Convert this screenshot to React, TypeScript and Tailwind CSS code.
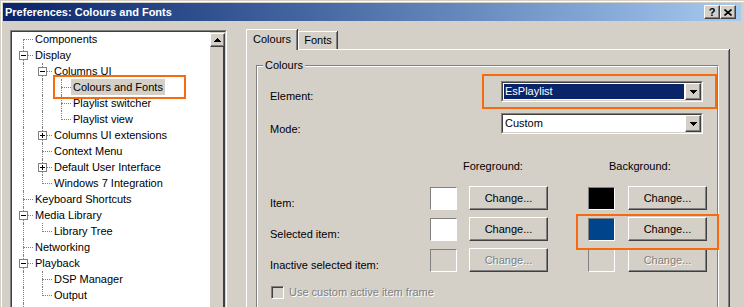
import React from "react";

type Row = {
  label: string;
  anc: boolean[];
  conn: "first" | "mid" | "end";
  box?: "+" | "-";
  sel?: boolean;
};

const rows: Row[] = [
  { label: "Components", anc: [], conn: "first" },
  { label: "Display", anc: [], conn: "mid", box: "-" },
  { label: "Columns UI", anc: [true], conn: "mid", box: "-" },
  { label: "Colours and Fonts", anc: [true, true], conn: "mid", sel: true },
  { label: "Playlist switcher", anc: [true, true], conn: "mid" },
  { label: "Playlist view", anc: [true, true], conn: "end" },
  { label: "Columns UI extensions", anc: [true], conn: "mid", box: "+" },
  { label: "Context Menu", anc: [true], conn: "mid" },
  { label: "Default User Interface", anc: [true], conn: "mid", box: "+" },
  { label: "Windows 7 Integration", anc: [true], conn: "end" },
  { label: "Keyboard Shortcuts", anc: [], conn: "mid" },
  { label: "Media Library", anc: [], conn: "mid", box: "-" },
  { label: "Library Tree", anc: [true], conn: "end" },
  { label: "Networking", anc: [], conn: "mid" },
  { label: "Playback", anc: [], conn: "mid", box: "-" },
  { label: "DSP Manager", anc: [true], conn: "mid" },
  { label: "Output", anc: [true], conn: "end" },
  { label: "Shell Integration", anc: [], conn: "mid" },
];

// classic 3D edges
const raised =
  "border border-t-white border-l-white border-r-[#404040] border-b-[#404040] shadow-[inset_-1px_-1px_0_#808080]";
const sunkenOuter =
  "border border-t-[#808080] border-l-[#808080] border-r-white border-b-white";
const sunkenInner =
  "border border-t-[#404040] border-l-[#404040] border-r-[#d4d0c8] border-b-[#d4d0c8]";
const disabledText = "text-[#808080] [text-shadow:1px_1px_0_#fff]";

function TreeRow({ row }: { row: Row }) {
  return (
    <div className="flex h-4 items-center">
      {row.anc.map((on, i) => (
        <div key={i} className="relative h-4 w-[19px] shrink-0">
          {on && (
            <div className="absolute left-[11px] top-0 h-4 border-l border-dotted border-[#808080]" />
          )}
        </div>
      ))}
      <div className="relative h-4 w-[19px] shrink-0">
        {row.conn === "first" && (
          <div className="absolute left-[11px] top-[8px] h-[8px] border-l border-dotted border-[#808080]" />
        )}
        {row.conn === "mid" && (
          <div className="absolute left-[11px] top-0 h-4 border-l border-dotted border-[#808080]" />
        )}
        {row.conn === "end" && (
          <div className="absolute left-[11px] top-0 h-[9px] border-l border-dotted border-[#808080]" />
        )}
        <div className="absolute left-[11px] top-[8px] w-[10px] border-t border-dotted border-[#808080]" />
        {row.box && (
          <div className="absolute left-[7px] top-[4px] flex h-[9px] w-[9px] items-center justify-center border border-[#808080] bg-white">
            <svg width="7" height="7" shapeRendering="crispEdges">
              <rect x="1" y="3" width="5" height="1" fill="#000" />
              {row.box === "+" && <rect x="3" y="1" width="1" height="5" fill="#000" />}
            </svg>
          </div>
        )}
      </div>
      <span
        className={
          "relative ml-[2px] whitespace-nowrap px-[2px] leading-4 " +
          (row.sel ? "bg-[#d4d0c8]" : "")
        }
      >
        {row.label}
      </span>
    </div>
  );
}

function Arrow({ up }: { up?: boolean }) {
  return (
    <svg width="7" height="4" shapeRendering="crispEdges">
      {up ? (
        <>
          <rect x="3" y="0" width="1" height="1" />
          <rect x="2" y="1" width="3" height="1" />
          <rect x="1" y="2" width="5" height="1" />
          <rect x="0" y="3" width="7" height="1" />
        </>
      ) : (
        <>
          <rect x="0" y="0" width="7" height="1" />
          <rect x="1" y="1" width="5" height="1" />
          <rect x="2" y="2" width="3" height="1" />
          <rect x="3" y="3" width="1" height="1" />
        </>
      )}
    </svg>
  );
}

function Combo({ value, selected }: { value: string; selected?: boolean }) {
  return (
    <div className={"flex h-[21px] w-[202px] " + sunkenOuter}>
      <div className={"flex flex-1 bg-white " + sunkenInner}>
        <div className="flex flex-1 p-px">
          <span
            className={
              "flex flex-1 items-center pl-px " +
              (selected ? "bg-[#0a246a] text-white" : "text-black")
            }
          >
            {value}
          </span>
        </div>
        <div className={"flex w-[16px] items-center justify-center bg-[#d4d0c8] " + raised}>
          <Arrow />
        </div>
      </div>
    </div>
  );
}

function Swatch({ color }: { color: string }) {
  return (
    <div
      className={
        "h-[23px] w-[27px] shrink-0 border border-t-[#808080] border-l-[#808080] border-r-white border-b-white " +
        color
      }
    />
  );
}

function ChangeBtn({ disabled }: { disabled?: boolean }) {
  return (
    <div
      className={
        "flex h-[24px] w-[79px] shrink-0 items-center justify-center " +
        raised +
        " " +
        (disabled ? disabledText : "text-black")
      }
    >
      Change...
    </div>
  );
}

function ColourRow({
  label,
  fg,
  bg,
  disabled,
}: {
  label: string;
  fg: string;
  bg: string;
  disabled?: boolean;
}) {
  return (
    <div className="flex h-[24px] items-center">
      <span className="w-[160px] shrink-0 pt-[10px]">{label}</span>
      <Swatch color={fg} />
      <div className="ml-[12px]">
        <ChangeBtn disabled={disabled} />
      </div>
      <div className="ml-[40px]">
        <Swatch color={bg} />
      </div>
      <div className="ml-[13px]">
        <ChangeBtn disabled={disabled} />
      </div>
    </div>
  );
}

export default function App() {
  return (
    <div className="relative h-[307px] w-[744px] overflow-hidden bg-[#d4d0c8] px-[3px] pt-[3px] font-['Liberation_Sans',Arial,sans-serif] text-[11px] text-black shadow-[inset_1px_1px_0_#d4d0c8,inset_2px_2px_0_#fff]">
      {/* title bar */}
      <div className="flex h-[18px] items-center justify-between bg-gradient-to-r from-[#0a246a] to-[#a6caf0] pl-[2px] pr-[5px]">
        <span className="text-[11px] font-bold leading-none text-white">
          Preferences: Colours and Fonts
        </span>
        <div className="flex">
          <div className={"flex h-[14px] w-[16px] items-center justify-center bg-[#d4d0c8] text-[11px] font-bold leading-none " + raised}>
            ?
          </div>
          <div className={"flex h-[14px] w-[16px] items-center justify-center bg-[#d4d0c8] " + raised}>
            <svg width="8" height="7" viewBox="0 0 8 7">
              <path d="M0.5 0.5L7.5 6.5M7.5 0.5L0.5 6.5" stroke="#000" strokeWidth="1.6" />
            </svg>
          </div>
        </div>
      </div>

      <div className="flex">
        {/* tree */}
        <div className={"ml-[7px] mt-[9px] h-[300px] w-[217px] shrink-0 " + sunkenOuter}>
          <div className={"flex h-full bg-white " + sunkenInner}>
            <div className="-mt-px flex-1 overflow-hidden">
              {rows.map((r) => (
                <TreeRow key={r.label} row={r} />
              ))}
            </div>
            <div className="flex w-[16px] flex-col border-l border-white bg-[#d4d0c8]">
              <div className={"mt-px flex h-[14px] items-center justify-center " + raised}>
                <Arrow up />
              </div>
              <div className="flex-1 border-r-2 border-[#404040]" />
            </div>
          </div>
        </div>

        {/* tab control */}
        <div className="ml-[19px] mt-[8px] flex w-[483px] shrink-0 flex-col">
          <div className="flex h-[20px] items-start">
            <div className="relative z-10 flex h-[21px] w-[51px] items-center justify-center border-l border-t border-white shadow-[inset_-1px_0_0_#808080,1px_0_0_#404040] bg-[#d4d0c8] pb-px">
              Colours
            </div>
            <div className="ml-px mt-[2px] flex h-[18px] w-[39px] items-center justify-center border-l border-t border-white shadow-[inset_-1px_0_0_#808080,1px_0_0_#404040]">
              Fonts
            </div>
          </div>
          <div className="h-[270px] border-l border-t border-white shadow-[inset_-1px_0_0_#808080,1px_0_0_#404040] pl-[9px] pt-[15px]">
            {/* group box */}
            <div className="relative h-[260px] w-[463px] border border-t-[#808080] border-l-[#808080] border-r-white border-b-white">
              <span className="absolute -top-[8px] left-[6px] bg-[#d4d0c8] px-[2px] leading-[14px]">
                Colours
              </span>
              <div className="h-full border border-t-white border-l-white border-r-[#808080] border-b-[#808080] pl-[12px] pt-[14px]">
                <div className="flex h-[21px] items-center">
                  <span className="w-[231px] shrink-0 pt-[9px]">Element:</span>
                  <Combo value="EsPlaylist" selected />
                </div>
                <div className="mt-[11px] flex h-[21px] items-center">
                  <span className="w-[231px] shrink-0 pt-[11px]">Mode:</span>
                  <Combo value="Custom" />
                </div>
                <div className="mt-[26px] flex h-[13px] items-center leading-[13px]">
                  <span className="ml-[193px] w-[146px]">Foreground:</span>
                  <span>Background:</span>
                </div>
                <div className="mt-[13px]">
                  <ColourRow label="Item:" fg="bg-white" bg="bg-black" />
                </div>
                <div className="mt-[7px]">
                  <ColourRow label="Selected item:" fg="bg-white" bg="bg-[#00458c]" />
                </div>
                <div className="mt-[7px]">
                  <ColourRow
                    label="Inactive selected item:"
                    fg="bg-[#d4d0c8]"
                    bg="bg-[#d4d0c8]"
                    disabled
                  />
                </div>
                <div className="mt-[14px] flex h-[13px] items-center">
                  <div className={"ml-px h-[13px] w-[13px] bg-[#d4d0c8] " + sunkenOuter + " shadow-[inset_1px_1px_0_#404040]"} />
                  <span className={"ml-[5px] " + disabledText}>Use custom active item frame</span>
                </div>
              </div>
            </div>
          </div>
        </div>
      </div>

      {/* orange annotation boxes */}
      <div className="pointer-events-none absolute left-[53px] top-[75px] h-[24px] w-[133px] border-2 border-[#f76b0f]" />
      <div className="pointer-events-none absolute left-[482px] top-[74px] h-[35px] w-[235px] border-2 border-[#f76b0f]" />
      <div className="pointer-events-none absolute left-[576px] top-[214px] h-[36px] w-[143px] border-2 border-[#f76b0f]" />
    </div>
  );
}
